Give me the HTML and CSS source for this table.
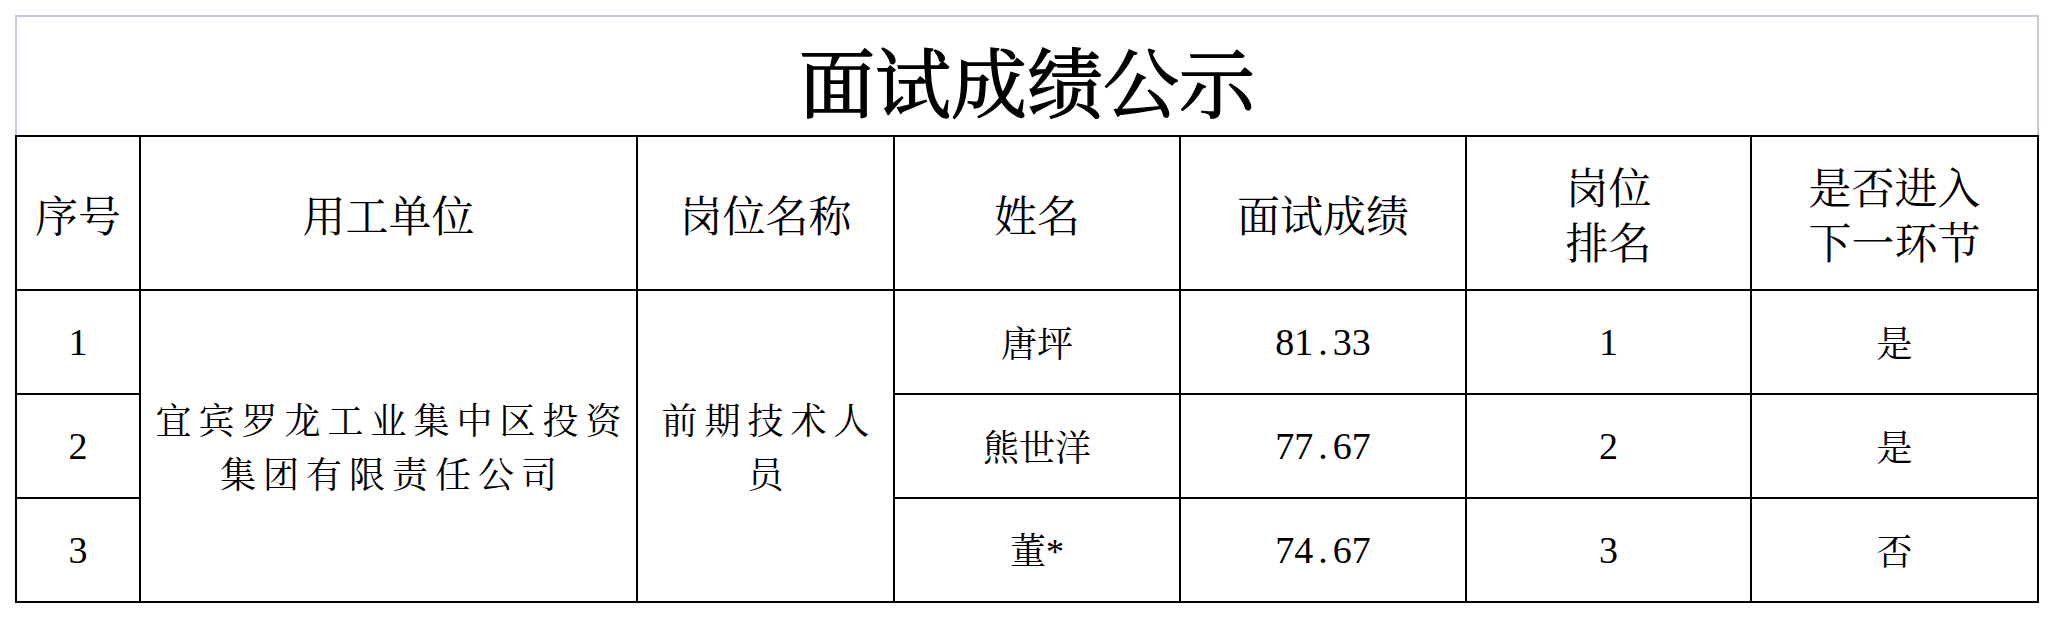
FILE: index.html
```html
<!DOCTYPE html>
<html lang="zh-CN">
<head>
<meta charset="utf-8">
<title>面试成绩公示</title>
<link rel="stylesheet" href="styles.css">
</head>
<body>
<div class="sheet">
  <table class="grid">
    <colgroup>
      <col class="c-no">
      <col class="c-unit">
      <col class="c-post">
      <col class="c-name">
      <col class="c-score">
      <col class="c-rank">
      <col class="c-next">
    </colgroup>
    <tr class="title-row">
      <td class="title" colspan="7">面试成绩公示</td>
    </tr>
    <tr class="head-row">
      <th>序号</th>
      <th>用工单位</th>
      <th>岗位名称</th>
      <th>姓名</th>
      <th>面试成绩</th>
      <th>岗位<br>排名</th>
      <th>是否进入<br>下一环节</th>
    </tr>
    <tr class="body-row">
      <td class="num">1</td>
      <td class="spread" rowspan="3">宜宾罗龙工业集中区投资集团有限责任公司</td>
      <td class="spread" rowspan="3">前期技术人员</td>
      <td>唐坪</td>
      <td class="num">81<span class="dot">.</span>33</td>
      <td class="num">1</td>
      <td>是</td>
    </tr>
    <tr class="body-row">
      <td class="num">2</td>
      <td>熊世洋</td>
      <td class="num">77<span class="dot">.</span>67</td>
      <td class="num">2</td>
      <td>是</td>
    </tr>
    <tr class="body-row">
      <td class="num">3</td>
      <td>董<span class="star">*</span></td>
      <td class="num">74<span class="dot">.</span>67</td>
      <td class="num">3</td>
      <td>否</td>
    </tr>
  </table>
</div>
</body>
</html>
```

FILE: styles.css
```css
html, body {
  margin: 0;
  padding: 0;
  background: #ffffff;
}

body {
  font-family: "Noto Serif CJK SC", "Noto Sans CJK SC", "Liberation Serif", serif;
  color: #000000;
}

.sheet {
  padding: 15px 0 0 15px;
}

.grid {
  border-collapse: collapse;
  table-layout: fixed;
  width: 2024px;
}

.c-no { width: 124px; }
.c-unit { width: 497px; }
.c-post { width: 257px; }
.c-name { width: 286px; }
.c-score { width: 286px; }
.c-rank { width: 285px; }
.c-next { width: 287px; }

.grid td,
.grid th {
  border: 2px solid #000000;
  text-align: center;
  vertical-align: middle;
  padding: 0 4px;
  overflow: hidden;
}

.title-row {
  height: 120px;
}

.grid .title {
  border-top: 2px solid #c5cbdc;
  border-left: 2px solid #c5cbdc;
  border-right: 2px solid #c5cbdc;
  border-bottom: 2px solid #000000;
  font-size: 76px;
  font-weight: 400;
  -webkit-text-stroke: 1.4px #000000;
  line-height: 1;
  padding-top: 8px;
}

.head-row {
  height: 154px;
}

.grid th {
  font-size: 43px;
  font-weight: 400;
  line-height: 55px;
}

.body-row {
  height: 104px;
}

.body-row td {
  font-size: 36px;
  line-height: 54px;
}

.grid .spread {
  letter-spacing: 7px;
  padding-left: 11px;
  padding-right: 4px;
}

.grid .num {
  font-family: "Liberation Serif", serif;
  font-size: 38px;
}

.dot {
  padding: 0 5px;
}

.star {
  font-family: "Liberation Serif", serif;
}
```
